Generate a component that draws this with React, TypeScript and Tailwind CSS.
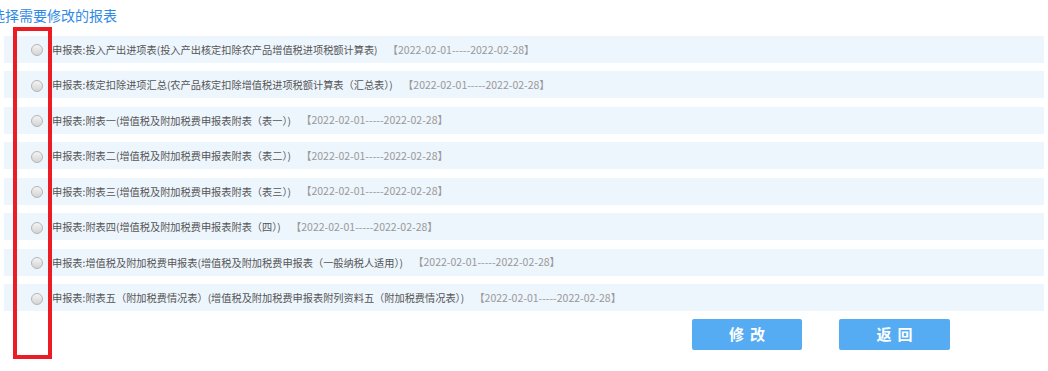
import React from "react";

const reports = [
  "申报表:投入产出进项表(投入产出核定扣除农产品增值税进项税额计算表)",
  "申报表:核定扣除进项汇总(农产品核定扣除增值税进项税额计算表（汇总表）)",
  "申报表:附表一(增值税及附加税费申报表附表（表一）)",
  "申报表:附表二(增值税及附加税费申报表附表（表二）)",
  "申报表:附表三(增值税及附加税费申报表附表（表三）)",
  "申报表:附表四(增值税及附加税费申报表附表（四）)",
  "申报表:增值税及附加税费申报表(增值税及附加税费申报表（一般纳税人适用）)",
  "申报表:附表五（附加税费情况表）(增值税及附加税费申报表附列资料五（附加税费情况表）)",
];

const period = "【2022-02-01-----2022-02-28】";

export default function App() {
  return (
    <div
      className="relative w-[1048px] h-[371px] bg-white overflow-hidden text-[10.2px] text-[#555]"
      style={{ fontFamily: '"Noto Sans CJK SC", "Liberation Sans", sans-serif' }}
    >
      {/* title */}
      <div className="h-[30px] pt-[5px] -ml-[9px] text-[14px] leading-[20px] text-[#2f8ae5]">
        选择需要修改的报表
      </div>

      {/* report list */}
      <div className="flex flex-col gap-[8.7px] pl-[4px] pr-[4px] pt-[6px]">
        {reports.map((name, i) => (
          <label key={i} className="flex items-center h-[26.8px] bg-[#edf5fd]">
            <span className="ml-[27px] mt-[2px] w-[12px] h-[12px] rounded-full border border-[#b5b5b5] bg-gradient-to-b from-[#f4f4f4] to-[#d4d4d4] shrink-0" />
            <span className="ml-[9px] whitespace-nowrap">{name}</span>
            <span className="ml-[10px] whitespace-nowrap text-[10.5px] text-[#999]">{period}</span>
          </label>
        ))}
      </div>

      {/* buttons */}
      <div className="flex mt-[8px] pl-[692px] gap-[37px]">
        <button className="w-[110px] h-[31px] rounded-[2px] bg-[#55acf2] text-white text-[15px] font-bold tracking-[6px] pl-[6px]">
          修改
        </button>
        <button className="w-[111px] h-[31px] rounded-[2px] bg-[#55acf2] text-white text-[15px] font-bold tracking-[6px] pl-[6px]">
          返回
        </button>
      </div>

      {/* annotation box */}
      <div className="absolute left-[13px] top-[27px] w-[39px] h-[332px] border-[4px] border-[#ec1c24] pointer-events-none" />
    </div>
  );
}
